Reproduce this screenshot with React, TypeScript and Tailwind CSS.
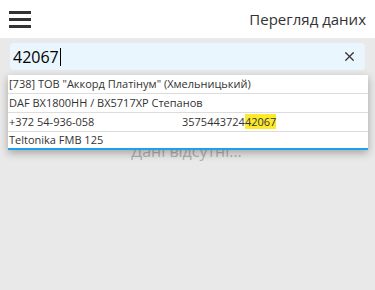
import { X } from "lucide-react";

export default function App() {
  const rows = [
    { left: '[738] ТОВ "Аккорд Платінум" (Хмельницький)' },
    { left: "DAF BX1800HH / BX5717XP Степанов" },
    { left: "+372 54-936-058", right: "3575443724", hit: "42067" },
    { left: "Teltonika FMB 125" },
  ];
  return (
    <div
      className="relative w-[375px] h-[290px] overflow-hidden bg-[#e9e9e9]"
      style={{ fontFamily: '"Open Sans", "Noto Sans", sans-serif' }}
    >
      <header className="h-[38px] bg-white flex items-center justify-between pl-[9px] pr-[9px]">
        <div className="flex flex-col gap-[4px] w-[22px]">
          <span className="h-[3px] bg-[#333]" />
          <span className="h-[3px] bg-[#333]" />
          <span className="h-[3px] bg-[#333]" />
        </div>
        <div className="text-[15px] text-[#333]">Перегляд даних</div>
      </header>

      <div className="px-[10px] pt-[5px]">
        <div className="h-[27px] rounded-[4px] bg-[#eaf6fd] flex items-center pl-[3px] pr-[8px]">
          <span className="text-[16px] text-black leading-none">42067</span>
          <span className="w-px h-[18px] bg-black ml-px" />
          <X className="ml-auto w-[15px] h-[15px] text-[#333]" strokeWidth={2} />
        </div>
      </div>

      <div className="pt-[71px] text-center text-[16px] leading-[20px] text-[#b0b0b0] pr-[2px]">
        Дані відсутні...
      </div>

      <div className="absolute left-[8px] right-[7px] top-[75px] bg-white shadow-[0_3px_8px_rgba(0,0,0,0.3)] border-b-2 border-[#1ea1ec]">
        {rows.map((r, i) => (
          <div
            key={i}
            className={`flex items-center pl-[1px] text-[11px] text-[#333] ${
              i < rows.length - 1 ? "h-[19px] border-b border-[#dcdcdc]" : "h-[16px]"
            }`}
          >
            <span className={r.right ? "w-[173px]" : ""}>{r.left}</span>
            {r.right && (
              <span>
                {r.right}
                <span className="bg-[#fdea2d]">{r.hit}</span>
              </span>
            )}
          </div>
        ))}
      </div>
    </div>
  );
}
